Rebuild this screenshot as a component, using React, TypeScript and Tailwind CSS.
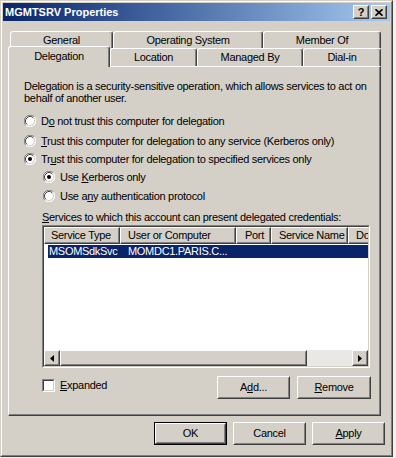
import type { ReactNode } from "react";

const raisedOuter = "border border-t-white border-l-white border-r-[#404040] border-b-[#404040]";
const raisedInner = "border border-t-[#d4d0c8] border-l-[#d4d0c8] border-r-[#808080] border-b-[#808080]";
const sunkenOuter = "border border-t-[#808080] border-l-[#808080] border-r-white border-b-white";
const sunkenInner = "border border-t-[#404040] border-l-[#404040] border-r-[#d4d0c8] border-b-[#d4d0c8]";

function Raised({ className = "", children }: { className?: string; children?: ReactNode }) {
  return (
    <div className={`${raisedOuter} bg-[#d4d0c8] ${className}`}>
      <div className={`${raisedInner} h-full w-full flex items-center justify-center`}>{children}</div>
    </div>
  );
}

function Button({ width, children, primary }: { width: string; children: ReactNode; primary?: boolean }) {
  if (primary) {
    return (
      <div className={`${width} h-[23px] border border-black`}>
        <Raised className="h-full w-full">{children}</Raised>
      </div>
    );
  }
  return <Raised className={`${width} h-[23px]`}>{children}</Raised>;
}

function Radio({ checked }: { checked?: boolean }) {
  return (
    <svg width="12" height="12" viewBox="0 0 12 12" className="shrink-0">
      <circle cx="6" cy="6" r="5" fill="#fff" />
      <path d="M1.76 10.24 A6 6 0 0 1 10.24 1.76" fill="none" stroke="#808080" strokeWidth="1" />
      <path d="M10.24 1.76 A6 6 0 0 1 1.76 10.24" fill="none" stroke="#fff" strokeWidth="1" />
      <path d="M2.82 9.18 A4.5 4.5 0 0 1 9.18 2.82" fill="none" stroke="#404040" strokeWidth="1" />
      <path d="M9.18 2.82 A4.5 4.5 0 0 1 2.82 9.18" fill="none" stroke="#d4d0c8" strokeWidth="1" />
      {checked && <circle cx="6" cy="6" r="2" fill="#000" />}
    </svg>
  );
}

function RadioRow({ checked, children, className = "" }: { checked?: boolean; children: ReactNode; className?: string }) {
  return (
    <div className={`flex items-center gap-[5px] h-[14px] ${className}`}>
      <Radio checked={checked} />
      <span className="whitespace-nowrap">{children}</span>
    </div>
  );
}

function Tab({ width, label, className = "" }: { width: string; label: string; className?: string }) {
  return (
    <div
      className={`${width} h-full flex items-center justify-center rounded-t-[3px] border-t border-l border-r border-t-white border-l-white border-r-[#404040] shadow-[inset_-1px_0_0_#808080] bg-[#d4d0c8] ${className}`}
    >
      {label}
    </div>
  );
}

function Arrow({ dir }: { dir: "left" | "right" }) {
  return (
    <svg width="4" height="7" viewBox="0 0 4 7">
      <polygon points={dir === "left" ? "4,0 0,3.5 4,7" : "0,0 4,3.5 0,7"} fill="#000" />
    </svg>
  );
}

const columns = [
  { label: "Service Type", w: "w-[76px]", pl: "pl-[6px]" },
  { label: "User or Computer", w: "w-[116px]", pl: "pl-[7px]" },
  { label: "Port", w: "w-[35px]", pl: "pl-[8px]" },
  { label: "Service Name", w: "w-[77px]", pl: "pl-[7px]" },
];

export default function App() {
  return (
    <div className="w-[396px] h-[458px] bg-[#f0f0f0] font-['Liberation_Sans',Arial,sans-serif] text-[11px] leading-[13px] tracking-[-0.3px] text-black">
      {/* window frame */}
      <div className="w-[393px] h-[457px] border border-t-[#d4d0c8] border-l-[#d4d0c8] border-r-[#404040] border-b-[#404040]">
        <div className="h-full w-full border border-t-white border-l-white border-r-[#808080] border-b-[#808080] bg-[#d4d0c8] p-px flex flex-col">
          {/* title bar */}
          <div className="h-[18px] flex items-center justify-between pl-[2px] pr-[3px] bg-gradient-to-r from-[#0a246a] to-[#a6caf0]">
            <span className="text-white font-bold tracking-normal">MGMTSRV Properties</span>
            <div className="flex gap-[2px]">
              <Raised className="w-[16px] h-[14px]">
                <span className="font-bold text-[11px] leading-[10px]">?</span>
              </Raised>
              <Raised className="w-[16px] h-[14px]">
                <svg width="8" height="7" viewBox="0 0 8 7">
                  <path d="M0.5 0.3 L7.5 6.7 M7.5 0.3 L0.5 6.7" stroke="#000" strokeWidth="1.7" />
                </svg>
              </Raised>
            </div>
          </div>

          {/* tabs */}
          <div className="mt-[10px] flex h-[17px] ml-[7px]">
            <Tab width="w-[103px]" label="General" />
            <Tab width="w-[150px]" label="Operating System" />
            <Tab width="w-[118px]" label="Member Of" />
          </div>
          <div className="flex h-[18px] ml-[5px]">
            <Tab width="w-[102px]" label="Delegation" className="relative z-10 !h-[21px] -mt-[2px] pb-[2px]" />
            <Tab width="w-[87px]" label="Location" />
            <Tab width="w-[106px]" label="Managed By" />
            <Tab width="w-[78px]" label="Dial-in" />
          </div>

          {/* tab page */}
          <div className="ml-[5px] w-[373px] h-[350px] border border-t-white border-l-white border-r-[#404040] border-b-[#404040] shadow-[inset_-1px_-1px_0_#808080] flex flex-col pl-[15px]">
            <p className="mt-[13px] leading-[12px] whitespace-nowrap">
              Delegation is a security-sensitive operation, which allows services to act on
              <br />
              behalf of another user.
            </p>
            <RadioRow className="mt-[10px]">
              D<u>o</u> not trust this computer for delegation
            </RadioRow>
            <RadioRow className="mt-[6px]">
              <u>T</u>rust this computer for delegation to any service (Kerberos only)
            </RadioRow>
            <RadioRow checked className="mt-[4px]">
              Tr<u>u</u>st this computer for delegation to specified services only
            </RadioRow>
            <RadioRow checked className="mt-[4px] ml-[19px]">
              Use <u>K</u>erberos only
            </RadioRow>
            <RadioRow className="mt-[5px] ml-[19px]">
              Use a<u>n</u>y authentication protocol
            </RadioRow>
            <div className="mt-[7px] ml-[18px] h-[14px] flex items-center whitespace-nowrap">
              <span>
                <u>S</u>ervices to which this account can present delegated credentials:
              </span>
            </div>

            {/* list view */}
            <div className={`mt-px ml-[18px] w-[328px] h-[143px] ${sunkenOuter}`}>
              <div className={`h-full w-full ${sunkenInner} bg-white flex flex-col overflow-hidden`}>
                <div className="flex h-[17px] shrink-0">
                  {columns.map((c) => (
                    <div
                      key={c.label}
                      className={`${c.w} shrink-0 h-full ${c.pl} flex items-center whitespace-nowrap bg-[#d4d0c8] border-t border-l border-t-white border-l-white border-r border-b border-r-[#404040] border-b-[#404040] shadow-[inset_-1px_-1px_0_#808080]`}
                    >
                      {c.label}
                    </div>
                  ))}
                  <div className="flex-1 h-full pl-[7px] flex items-center overflow-hidden whitespace-nowrap bg-[#d4d0c8] border-t border-l border-t-white border-l-white border-b border-b-[#404040] shadow-[inset_0_-1px_0_#808080]">
                    Do
                  </div>
                </div>
                <div className="mt-px ml-[4px] h-[13px] flex items-center bg-[#0a246a] text-white whitespace-nowrap">
                  <span className="w-[80px] pl-px">MSOMSdkSvc</span>
                  <span>MOMDC1.PARIS.C...</span>
                </div>
                <div className="flex-1" />
                <div className="h-[16px] flex shrink-0">
                  <Raised className="w-[16px] h-[16px]">
                    <Arrow dir="left" />
                  </Raised>
                  <Raised className="w-[247px] h-[16px]" />
                  <div className="flex-1 bg-[#eae8e4]" />
                  <Raised className="w-[16px] h-[16px]">
                    <Arrow dir="right" />
                  </Raised>
                </div>
              </div>
            </div>

            {/* checkbox + buttons */}
            <div className="mt-[8px] ml-[18px] w-[329px] flex items-start">
              <div className="mt-[2px] flex items-center gap-[5px] h-[14px]">
                <div className={`w-[13px] h-[13px] ${sunkenOuter}`}>
                  <div className={`w-full h-full ${sunkenInner} bg-white`} />
                </div>
                <span>
                  <u>E</u>xpanded
                </span>
              </div>
              <div className="ml-auto flex gap-[7px]">
                <Button width="w-[73px]">
                  A<u>d</u>d...
                </Button>
                <Button width="w-[74px]">
                  <u>R</u>emove
                </Button>
              </div>
            </div>
          </div>

          {/* dialog buttons */}
          <div className="mt-[6px] flex justify-end gap-[6px] pr-[5px]">
            <Button width="w-[73px]" primary>
              OK
            </Button>
            <Button width="w-[73px]">Cancel</Button>
            <Button width="w-[73px]">
              <u>A</u>pply
            </Button>
          </div>
        </div>
      </div>
    </div>
  );
}
